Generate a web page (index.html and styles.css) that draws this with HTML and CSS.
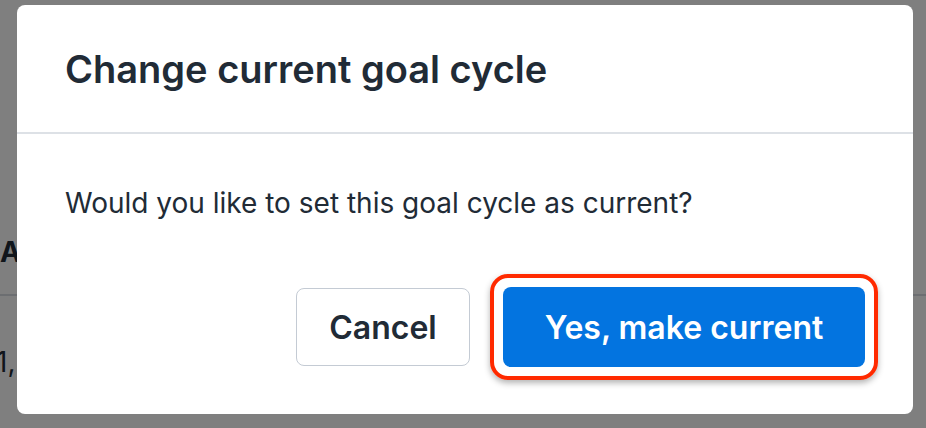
FILE: index.html
```html
<!DOCTYPE html>
<html lang="en">
<head>
  <meta charset="UTF-8" />
  <meta name="viewport" content="width=device-width, initial-scale=1.0" />
  <title>Change current goal cycle</title>
  <link rel="stylesheet" href="styles.css">
</head>
<body>

<!-- Page behind the dialog -->
<div class="page">
  <div class="page-mark">,</div>
  <div class="table-head">A</div>
  <div class="table-row">1,</div>
</div>

<!-- Dialog -->
<div class="overlay">
  <div class="modal">
    <div class="modal-header">
      <h1>Change current goal cycle</h1>
    </div>
    <div class="modal-body">
      <p>Would you like to set this goal cycle as current?</p>
    </div>
    <div class="modal-footer">
      <button class="btn btn-secondary">Cancel</button>
      <button class="btn btn-primary highlighted">Yes, make current</button>
    </div>
  </div>
</div>

</body>
</html>
```

FILE: styles.css
```css
/* General */
body {
  margin: 0;
  padding: 0;
  height: 428px;
  overflow: hidden;
  font-family: Inter, "Noto Sans", sans-serif;
  color: #212b36;
  background-color: #ffffff;
}

/* Page content behind the overlay */
.page {
  height: 100%;
  display: flex;
  flex-direction: column;
  font-size: 28px;
}

.page-mark {
  margin-top: 100px;
  height: 30px;
  margin-left: -5px;
  font-size: 20px;
}

.table-head {
  margin-top: 96px;
  height: 80px;
  font-weight: 700;
  line-height: 58px;
  border-bottom: 2px solid #d8dde3;
}

.table-row {
  line-height: 132px;
  margin-left: -4px;
}

/* Overlay + dialog */
.overlay {
  position: fixed;
  inset: 0;
  background: rgba(0, 0, 0, 0.5);
  display: flex;
  align-items: flex-start;
}

.modal {
  margin: 5px 0 0 17px;
  width: 896px;
  height: 409px;
  background: #ffffff;
  border-radius: 8px;
  display: flex;
  flex-direction: column;
}

.modal-header {
  height: 86px;
  padding: 41px 48px 0;
  border-bottom: 2px solid #dde1e6;
}

.modal-header h1 {
  margin: 0;
  font-size: 38px;
  line-height: 46px;
  font-weight: 600;
}

.modal-body {
  padding: 52px 48px 0;
}

.modal-body p {
  margin: 0;
  font-size: 28px;
  line-height: 34px;
}

.modal-footer {
  margin-top: auto;
  padding: 0 48px 47px;
  display: flex;
  justify-content: flex-end;
  gap: 33px;
}

.btn {
  font-family: inherit;
  font-size: 32px;
  font-weight: 600;
  height: 80px;
  padding: 0;
  border-radius: 8px;
  cursor: pointer;
}

.btn-secondary {
  width: 174px;
  height: 78px;
  margin-top: 1px;
  background: #ffffff;
  color: #212b36;
  border: 1.5px solid #c4cbd4;
}

.btn-primary {
  width: 362px;
  background: #0374e0;
  color: #ffffff;
  border: none;
}

/* Red annotation ring around the primary action */
.highlighted {
  position: relative;
}

.highlighted::after {
  content: "";
  position: absolute;
  inset: -13px;
  border: 4px solid #ff2a00;
  border-radius: 18px;
  box-shadow: 0 3px 6px rgba(0, 0, 0, 0.3);
}
```
